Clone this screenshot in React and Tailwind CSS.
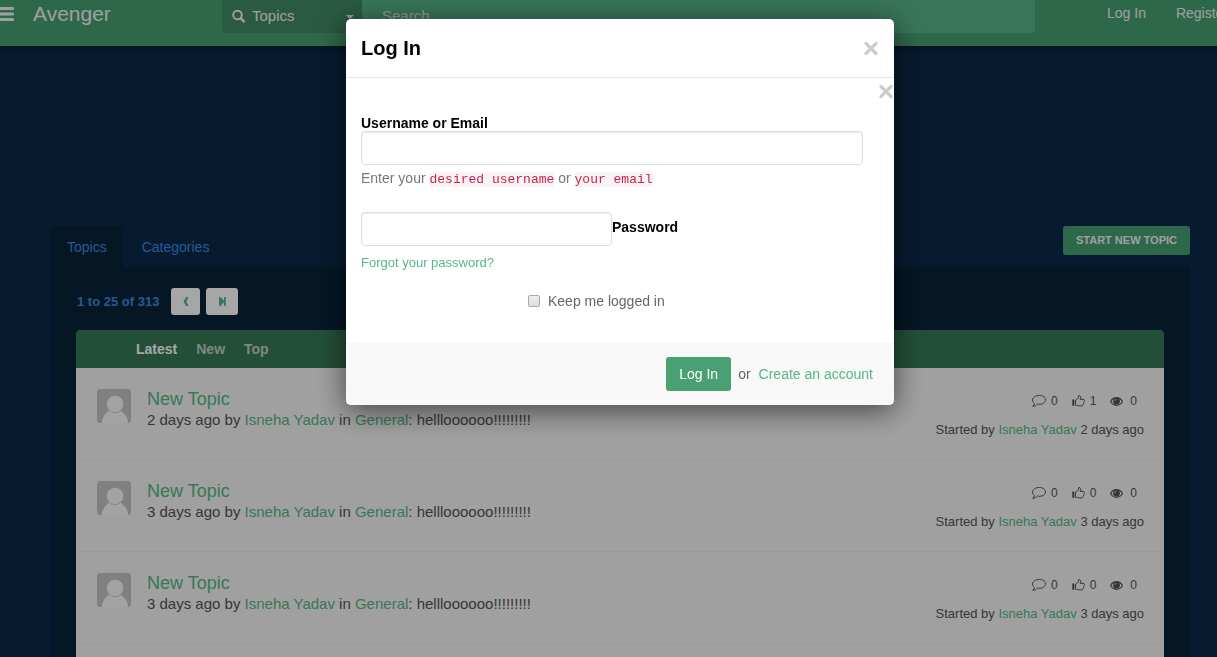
import React from "react";

const topics = [
  { id: 1, age: "2 days ago", comments: 0, likes: 1, views: 0 },
  { id: 2, age: "3 days ago", comments: 0, likes: 0, views: 0 },
  { id: 3, age: "3 days ago", comments: 0, likes: 0, views: 0 },
];

function MenuIcon() {
  return (
    <svg aria-hidden="true" viewBox="0 0 14 14" className="size-3.5" fill="currentColor">
      <path d="M0 0h13q1 0 1 1v1q0 1-1 1H0zM0 5.500h13q1 0 1 1v1q0 1-1 1H0zM0 11h13q1 0 1 1v1q0 1-1 1H0z" />
    </svg>
  );
}

function SearchIcon() {
  return (
    <svg aria-hidden="true" viewBox="0 0 14 14" className="size-3.5" fill="none" stroke="currentColor">
      <circle cx="5.500" cy="5" r="4.300" strokeWidth="1.900" />
      <path d="M8.800 8.300l3 3" strokeWidth="2.400" strokeLinecap="round" />
    </svg>
  );
}

function CloseIcon() {
  return (
    <svg aria-hidden="true" viewBox="0 0 15 15" className="size-[15px]" fill="none" stroke="currentColor" strokeWidth="3.200" strokeLinecap="round">
      <path d="M2 2.500l10 10M12 2.500l-10 10" />
    </svg>
  );
}

function CommentIcon() {
  return (
    <svg aria-hidden="true" viewBox="0 0 14 12" className="h-3 w-3.5" fill="none" stroke="currentColor" strokeLinejoin="round">
      <path d="M7.400 .5C11 .5 13.500 2.400 13.500 4.900S11 9.300 7.400 9.300c-.8 0-1.500-.1-2.100-.2C4.200 10.300 2.800 11.200 .8 11.500c.8-.9 1.500-2 1.600-3.100C1.100 7.500.5 6.300.5 4.900.5 2.400 3.800.5 7.400.5z" />
    </svg>
  );
}

function ThumbIcon() {
  return (
    <svg aria-hidden="true" viewBox="0 0 13 12" className="h-3 w-[13px]" fill="none" stroke="currentColor" strokeLinejoin="round">
      <path d="M.3 4.500h2v6.300h-2z" fill="currentColor" stroke="none" />
      <path d="M3.500 5.200c1.900-.5 3-2.300 3.200-4.600 2.100-.4 2.500 1.700 1.300 3.700h3c1.500 0 1.800 1.300 1 2 .4.700.2 1.400-.4 1.800.1.800-.1 1.200-.6 1.500 0 .9-.6 1.300-1.600 1.300H7.200c-1.400 0-2.300-.7-3.700-.8z" />
    </svg>
  );
}

function EyeIcon() {
  return (
    <svg aria-hidden="true" viewBox="0 0 13 9" className="h-[9px] w-[13px]" fill="none" stroke="currentColor">
      <path d="M.5 4.500C2 2 4 .7 6.500 .7S11 2 12.500 4.500C11 7 9 8.300 6.500 8.300S2 7 .5 4.500z" strokeWidth="1.200" />
      <circle cx="6.500" cy="4.200" r="3.400" fill="currentColor" stroke="none" />
      <path d="M4.700 4q0-1.600 1.700-1.700" stroke="#f6f6f6" strokeWidth=".7" />
    </svg>
  );
}

function Avatar() {
  return (
    <svg role="img" aria-label="Isneha Yadav" viewBox="0 0 34 34" className="mt-px size-[34px] shrink-0 rounded-[3px] bg-[#c5c5c5]">
      <path d="M5 34c0-6 4-11 9-13h8c5 2 9 7 9 13z" fill="#fafafa" />
      <circle cx="18" cy="15" r="8.700" fill="#fafafa" stroke="#c5c5c5" strokeWidth=".8" />
    </svg>
  );
}

function TopicRow({ topic }) {
  return (
    <li className="flex min-h-[92px] border-b border-[#ececec] pt-5 pr-5 pl-[21px] text-[#555]">
      <Avatar />
      <div className="ml-4 flex-1 text-[15px] leading-5">
        <h2 className="text-lg leading-[22px]"><a href="#topic" className="text-[#56b787]">New Topic</a></h2>
        <p>
          {topic.age} by <a href="#user" className="text-[#56b787]">Isneha Yadav</a> in{" "}
          <a href="#general" className="text-[#56b787]">General</a>: hellloooooo!!!!!!!!!
        </p>
      </div>
      <div className="flex flex-col items-end gap-[9px] pt-[3px] text-[13px] leading-5">
        <div className="flex gap-3.5 pr-[7px] text-xs leading-5">
          <span className="flex items-center gap-[5px]"><CommentIcon />{topic.comments}</span>
          <span className="flex items-center gap-[5px]"><ThumbIcon />{topic.likes}</span>
          <span className="flex items-center gap-[7px]"><EyeIcon />{topic.views}</span>
        </div>
        <p>Started by <a href="#user" className="text-[#56b787]">Isneha Yadav</a> {topic.age}</p>
      </div>
    </li>
  );
}

function Header() {
  return (
    <header className="flex h-[46px] shrink-0 items-start bg-[#48a073] text-[#f5f5f5] shadow-[0_2px_8px_#0006]">
      <div className="flex w-[222px] shrink-0 items-center">
        <button type="button" aria-label="Menu"><MenuIcon /></button>
        <a href="#home" className="ml-[19px] text-[21px] leading-7">Avenger</a>
      </div>
      <div className="flex h-[33px] min-w-0 flex-1 overflow-hidden rounded-b bg-[#56b58a]">
        <label className="flex w-[140px] shrink-0 items-center bg-[#428a67] pl-2.5">
          <SearchIcon />
          <select aria-label="Search in" className="ml-1.5 flex-1 appearance-none bg-transparent text-[15px] outline-none">
            <option>Topics</option>
          </select>
          <span className="mr-2 border-x-4 border-t-4 border-x-transparent border-t-[#eee]" />
        </label>
        <input aria-label="Search" placeholder="Search" className="min-w-0 flex-1 bg-transparent px-5 text-[15px] outline-none placeholder:text-[#dcefe5]" />
      </div>
      <nav className="flex w-[182px] shrink-0 gap-[30px] overflow-hidden pl-[72px] text-sm leading-[26px] whitespace-nowrap">
        <a href="#login">Log In</a>
        <a href="#register">Register</a>
      </nav>
    </header>
  );
}

function Forum() {
  return (
    <main className="flex flex-1 flex-col pt-[180px] pr-[27px] pl-[51px]">
      <div className="flex items-start justify-between">
        <nav className="flex text-sm leading-[39px] text-[#3b8be0]">
          <a href="#topics" className="rounded-t bg-[#08233a] px-4 pt-0.5">Topics</a>
          <a href="#categories" className="px-[19px] pt-0.5">Categories</a>
        </nav>
        <button type="button" className="h-[29px] rounded-[3px] bg-[#48a073] px-[13px] text-[11px] font-bold text-[#f5f5f5]">START NEW TOPIC</button>
      </div>
      <section className="flex flex-1 flex-col bg-[#08233a] px-[26px] pt-[21px]">
        <div className="flex items-center text-[13px] font-bold text-[#3b8be0]">
          <span>1 to 25 of 313</span>
          <button type="button" aria-label="Previous page" className="ml-3 flex h-[27px] w-[29px] items-center justify-center rounded-[3px] bg-white text-[#56b787]">
            <svg viewBox="0 0 6 9" className="h-[9px] w-1.5" fill="currentColor"><path d="M3 0h2.600L3.400 4.500 5.600 9H3L.5 4.500z" /></svg>
          </button>
          <button type="button" aria-label="Last page" className="ml-1.5 flex h-[27px] w-8 items-center justify-center rounded-[3px] bg-white text-[#56b787]">
            <svg viewBox="0 0 7 9" className="h-[9px] w-[7px]" fill="currentColor"><path d="M0 0h1.500L5 3.800V0h1.800v9H5V5.200L1.500 9H0z" /></svg>
          </button>
        </div>
        <nav className="-ml-px mt-[15px] flex h-[38px] shrink-0 items-center gap-[19px] rounded-t bg-[#367a58] pl-[60px] text-sm font-bold text-[#c5d0c9]">
          <a href="#latest" className="text-white">Latest</a>
          <a href="#new">New</a>
          <a href="#top">Top</a>
        </nav>
        <ul className="-ml-px flex-1 bg-[#f6f6f6]">{topics.map((topic) => <TopicRow key={topic.id} topic={topic} />)}</ul>
      </section>
    </main>
  );
}

const fieldClass = "block h-[34px] rounded border border-[#ddd] px-3 shadow-[inset_0_1px_1px_#00000013] outline-none";
const codeClass = "rounded bg-[#f9f2f4] font-['Liberation_Mono',monospace] text-[13px] text-[#c7254e]";

function LoginDialog() {
  return (
    <div className="fixed inset-0 flex items-start justify-center bg-black/35 pt-[19px] pl-[23px]">
      <form role="dialog" aria-labelledby="login-title" className="w-[548px] overflow-hidden rounded-[5px] bg-white text-sm leading-5 text-[#666] shadow-[0_5px_30px_#0009]">
        <header className="flex h-[59px] items-center justify-between border-b border-[#e5e5e5] px-[15px]">
          <h1 id="login-title" className="text-xl font-bold text-black">Log In</h1>
          <button type="button" aria-label="Close" className="text-[#ccc]"><CloseIcon /></button>
        </header>
        <div className="flex justify-end pt-1.5">
          <button type="button" aria-label="Dismiss form" className="text-[#ccc]"><CloseIcon /></button>
        </div>
        <div className="px-[15px] pt-4">
          <label htmlFor="username" className="block leading-4 font-bold text-black">Username or Email</label>
          <input id="username" className={`${fieldClass} w-[502px]`} />
          <p className="mt-[3px] text-[#777]">
            Enter your <code className={codeClass}>desired username</code> or <code className={codeClass}>your email</code>
          </p>
          <div className="mt-[22px] flex">
            <input id="password" type="password" className={`${fieldClass} w-[251px]`} />
            <label htmlFor="password" className="pt-[5px] font-bold text-black">Password</label>
          </div>
          <a href="#forgot" className="mt-[7px] block w-fit text-[13px] text-[#56b787]">Forgot your password?</a>
          <label className="mt-[18px] ml-[167px] flex w-fit items-center gap-2">
            <input type="checkbox" className="size-3 appearance-none rounded-[2px] border border-[#a9a9a9] bg-linear-to-b from-[#eee] to-[#ddd] checked:bg-[#48a073]" />
            Keep me logged in
          </label>
        </div>
        <footer className="mt-8 flex h-[62px] items-center justify-end bg-[#f8f8f8] pr-[21px]">
          <button type="submit" className="h-[34px] rounded-[3px] bg-[#48a073] px-[13px] text-white">Log In</button>
          <span className="mr-2 ml-[7px]">or</span>
          <a href="#register" className="text-[#56b787]">Create an account</a>
        </footer>
      </form>
    </div>
  );
}

export default function App() {
  return (
    <div className="flex min-h-screen flex-col bg-[#0b2a4a] font-['Liberation_Sans',Arial,sans-serif]">
      <Header />
      <Forum />
      <LoginDialog />
    </div>
  );
}
